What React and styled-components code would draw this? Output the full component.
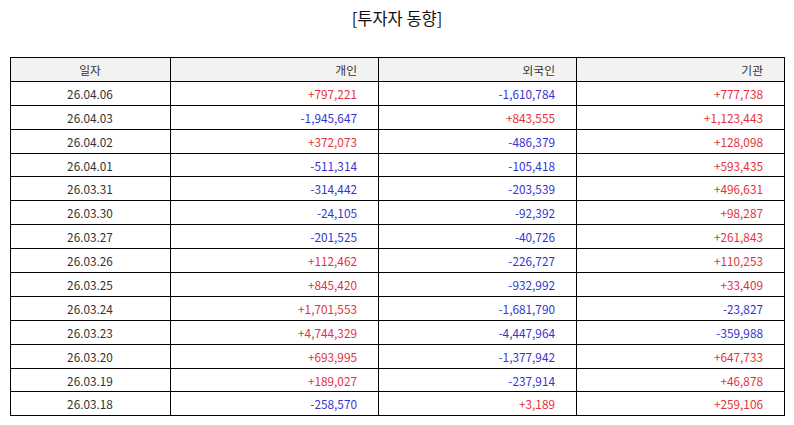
import React from "react";
import styled, { createGlobalStyle } from "styled-components";

const GlobalStyle = createGlobalStyle`
  body {
    margin: 0;
    background: #fff;
    font-family: "Noto Sans CJK KR", "Noto Sans", sans-serif;
  }
`;

const Page = styled.div`
  width: 794px;
  padding: 6px 10px 0;
  box-sizing: border-box;
`;

const Title = styled.h1`
  margin: 0 0 27px;
  font-size: 16.5px;
  font-weight: 400;
  text-align: center;
  color: #111;
  line-height: 24px;
`;

const Table = styled.table`
  width: 774px;
  border-collapse: collapse;
  table-layout: fixed;
  font-size: 11.8px;
  color: #333;
`;

const Th = styled.th`
  height: 22.9px;
  padding: 0 21px 0 20px;
  border: 1px solid #000;
  background: #f2f2f2;
  font-weight: 400;
  text-align: ${(p) => (p.center ? "center" : "right")};
`;

const Td = styled.td`
  height: 22.9px;
  padding: 0 21px 0 20px;
  border: 1px solid #000;
  text-align: ${(p) => (p.center ? "center" : "right")};
  color: ${(p) => (p.sign === "+" ? "#e5313c" : p.sign === "-" ? "#3434d0" : "#333")};
`;

const rows = [
  ["26.04.06", "+797,221", "-1,610,784", "+777,738"],
  ["26.04.03", "-1,945,647", "+843,555", "+1,123,443"],
  ["26.04.02", "+372,073", "-486,379", "+128,098"],
  ["26.04.01", "-511,314", "-105,418", "+593,435"],
  ["26.03.31", "-314,442", "-203,539", "+496,631"],
  ["26.03.30", "-24,105", "-92,392", "+98,287"],
  ["26.03.27", "-201,525", "-40,726", "+261,843"],
  ["26.03.26", "+112,462", "-226,727", "+110,253"],
  ["26.03.25", "+845,420", "-932,992", "+33,409"],
  ["26.03.24", "+1,701,553", "-1,681,790", "-23,827"],
  ["26.03.23", "+4,744,329", "-4,447,964", "-359,988"],
  ["26.03.20", "+693,995", "-1,377,942", "+647,733"],
  ["26.03.19", "+189,027", "-237,914", "+46,878"],
  ["26.03.18", "-258,570", "+3,189", "+259,106"],
];

export default function App() {
  return (
    <>
      <GlobalStyle />
      <Page>
        <Title>[투자자 동향]</Title>
        <Table>
          <colgroup>
            <col style={{ width: 160 }} />
            <col style={{ width: 208 }} />
            <col style={{ width: 198 }} />
            <col style={{ width: 208 }} />
          </colgroup>
          <thead>
            <tr>
              <Th center>일자</Th>
              <Th>개인</Th>
              <Th>외국인</Th>
              <Th>기관</Th>
            </tr>
          </thead>
          <tbody>
            {rows.map((r) => (
              <tr key={r[0]}>
                <Td center>{r[0]}</Td>
                {r.slice(1).map((v, i) => (
                  <Td key={i} sign={v[0]}>{v}</Td>
                ))}
              </tr>
            ))}
          </tbody>
        </Table>
      </Page>
    </>
  );
}
